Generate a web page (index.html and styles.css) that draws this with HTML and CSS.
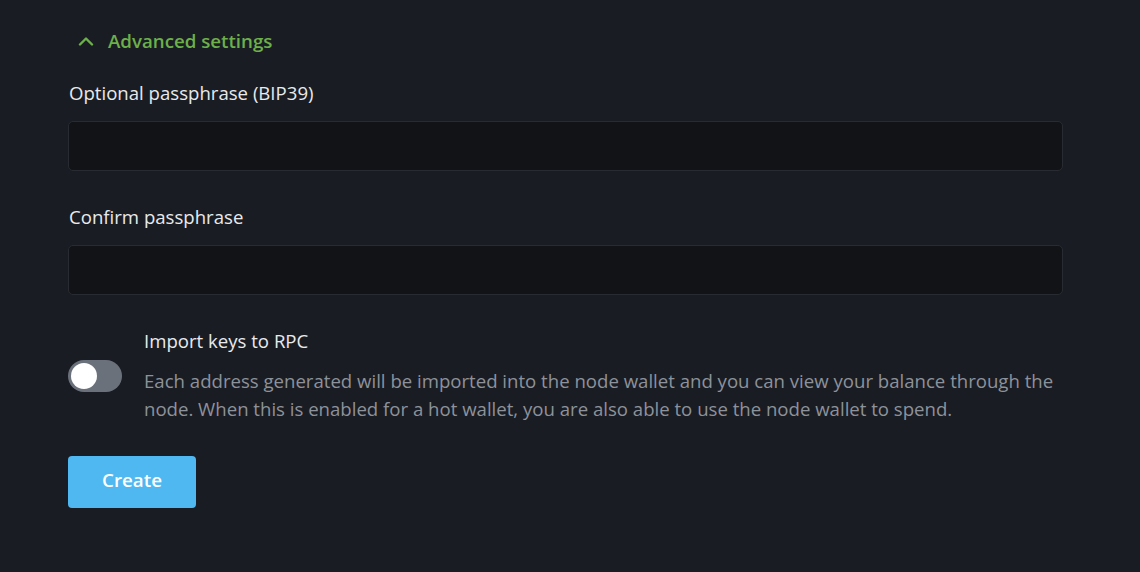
FILE: index.html
```html
<!DOCTYPE html>
<html>
<head>
<meta charset="utf-8">
<link rel="stylesheet" href="styles.css">
</head>
<body>
<div class="form">
  <div class="adv">
    <svg class="chev" width="16" height="10" viewBox="0 0 16 10"><path d="M2 8.5 L8 2.5 L14 8.5" fill="none" stroke="#6cb04a" stroke-width="2.4" stroke-linecap="round" stroke-linejoin="round"/></svg>
    <span>Advanced settings</span>
  </div>
  <div class="field">
    <label class="label">Optional passphrase (BIP39)</label>
    <div class="input"></div>
  </div>
  <div class="field">
    <label class="label">Confirm passphrase</label>
    <div class="input"></div>
  </div>
  <div class="toggle-row">
    <div class="toggle-col"><div class="toggle"><div class="knob"></div></div></div>
    <div class="toggle-text">
      <div class="t-title">Import keys to RPC</div>
      <div class="t-desc">Each address generated will be imported into the node wallet and you can view your balance through the node. When this is enabled for a hot wallet, you are also able to use the node wallet to spend.</div>
    </div>
  </div>
  <button class="btn">Create</button>
</div>
</body>
</html>
```
FILE: styles.css
```css
html, body { margin: 0; padding: 0; }
body {
  background: #1a1c23;
  font-family: "Open Sans", "Noto Sans", sans-serif;
  color: #e8eaec;
  width: 1140px;
  height: 572px;
  overflow: hidden;
}
.form {
  padding: 29px 0 0 68px;
  width: 995px;
}
.adv {
  display: flex;
  align-items: center;
  gap: 14px;
  padding-left: 10px;
  color: #6cb04a;
  font-size: 18.7px;
  font-weight: 600;
  line-height: 24px;
}
.chev { display: block; }
.field { margin-top: 28px; }
.label {
  display: block;
  font-size: 18.6px;
  line-height: 24px;
  padding-left: 1px;
}
.input {
  margin-top: 16px;
  height: 48px;
  background: #111317;
  border: 1.5px solid #282b32;
  border-radius: 5px;
}
.field + .field { margin-top: 34px; }
.toggle-row {
  display: flex;
  margin-top: 34px;
}
.toggle-col {
  width: 76px;
  flex: none;
  padding-top: 31px;
}
.toggle {
  width: 54px;
  height: 32px;
  border-radius: 16px;
  background: #6b717a;
  position: relative;
}
.knob {
  position: absolute;
  left: 3px;
  top: 3px;
  width: 26px;
  height: 26px;
  border-radius: 50%;
  background: #ffffff;
}
.t-title {
  font-size: 18.6px;
  line-height: 24px;
}
.t-desc {
  margin-top: 14px;
  font-size: 18.6px;
  line-height: 28px;
  color: #8d929a;
}
.btn {
  margin-top: 33px;
  width: 128px;
  height: 52px;
  padding: 0 0 4px 0;
  border: none;
  border-radius: 4px;
  background: #4fb8f1;
  color: #ffffff;
  font-family: "Open Sans", "Noto Sans", sans-serif;
  font-size: 18.8px;
  font-weight: 600;
  display: block;
}
```
